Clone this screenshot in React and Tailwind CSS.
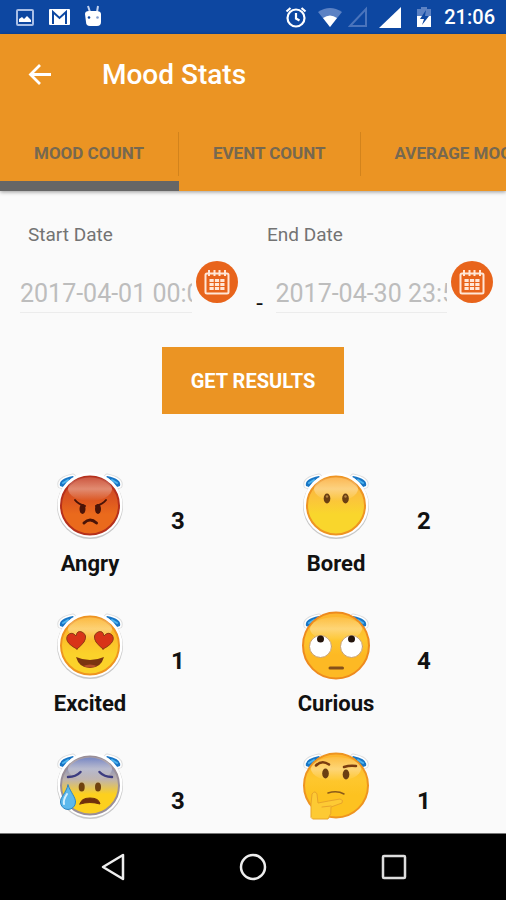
import { useState } from 'react'

const TABS = ['MOOD COUNT', 'EVENT COUNT', 'AVERAGE MOOD']

const MOODS = [
  { name: 'Angry', count: 3, Face: AngryFace },
  { name: 'Bored', count: 2, Face: BoredFace },
  { name: 'Excited', count: 1, Face: ExcitedFace },
  { name: 'Curious', count: 4, Face: CuriousFace },
  { name: 'Sad', count: 3, Face: SadFace },
  { name: 'Thoughtful', count: 1, Face: ThoughtfulFace },
]

function StatusBar() {
  return (
    <div className="flex h-[34px] shrink-0 items-center justify-between bg-[#0d47a1] pl-4 pr-[11px] text-white">
      <div className="flex items-center gap-3">
        <svg className="h-5 w-5" viewBox="0 0 20 20" fill="none">
          <rect x="1" y="3" width="16" height="15" rx="1" stroke="#a9bfe6" strokeWidth="2" />
          <path d="M3 15v-3l3-2 2 2 3-3 4 4v2z" fill="#fff" />
        </svg>
        <svg className="h-5 w-6" viewBox="0 0 24 20">
          <rect x="1" y="2" width="21" height="16" rx="1" fill="#fff" />
          <path d="M5 17V5l6.500 6L18 5v12" fill="none" stroke="#0d47a1" strokeWidth="2" />
        </svg>
        <svg className="h-6 w-5" viewBox="0 0 20 24" fill="#fff">
          <path d="M4 1l2 6M14 1l-1 6" stroke="#c5d4f0" strokeWidth="2" />
          <path d="M1 9q0-3 4-3h7q5 0 5 3v8q0 4-4 4H6q-4 0-4-4z" />
          <circle cx="5" cy="12.500" r="1.300" fill="#0d47a1" />
          <circle cx="13.500" cy="12.500" r="1.300" fill="#7f9bd0" />
        </svg>
      </div>
      <div className="flex items-center">
        <svg className="h-6 w-6" viewBox="0 0 24 24" fill="none" stroke="#fff" strokeWidth="2.200">
          <circle cx="12" cy="13" r="8.500" />
          <path d="M12 8v5.500l3.500 2M2.500 6.500l4-3.500M21.500 6.500l-4-3.500" />
        </svg>
        <svg className="ml-2.5 h-6 w-6" viewBox="0 0 24 24">
          <path d="M0 7Q12-1 24 7L12 22z" fill="#5c82c4" />
          <path d="M5 13q7-5 14 0l-7 9z" fill="#fff" />
        </svg>
        <svg className="ml-1.5 h-6 w-5" viewBox="0 0 20 24">
          <path d="M2 21L18 4v17z" fill="none" stroke="#4a74bc" strokeWidth="2" />
        </svg>
        <svg className="ml-2.5 h-6 w-6" viewBox="0 0 24 24">
          <path d="M1 23L23 2v21z" fill="#fff" />
        </svg>
        <svg className="ml-3 mr-2.5 h-6 w-5" viewBox="0 0 20 24">
          <path d="M3 4h4V2h6v2h4v8H3z" fill="#5c82c4" />
          <path d="M3 11h14v11H3z" fill="#fff" />
          <path d="M12 5l-6 9h4l-2 6 7-9h-4z" fill="#0d47a1" />
        </svg>
        <span className="text-xl font-medium">21:06</span>
      </div>
    </div>
  )
}

function CalendarButton({ label }) {
  return (
    <button type="button" aria-label={label} className="h-[42px] w-[42px] shrink-0">
      <svg viewBox="0 0 42 42" fill="none">
        <circle cx="21" cy="21" r="21" fill="#e8641b" />
        <rect x="9.500" y="12.500" width="23" height="20" rx="1.500" stroke="#ffe6d6" strokeWidth="2" />
        <path d="M13 9v6M18.500 9v6M23.500 9v6M29 9v6" stroke="#ffe6d6" strokeWidth="2" />
        <path d="M13.500 19.500h15M13.500 23.500h15M13.500 27.500h15" stroke="#ffe6d6" strokeWidth="3" strokeDasharray="4.200 1.200" />
      </svg>
    </button>
  )
}

// Blue halo whose two ends peek out behind every face
function Halo() {
  const ends = 'M6 16Q4 9 19 6L24 12L9 17zM66 16Q68 9 53 6L48 12L63 17z'
  return (
    <>
      <path d={ends} stroke="#dedede" strokeWidth="5" strokeLinejoin="round" />
      <path d={ends} stroke="#fff" strokeWidth="3" strokeLinejoin="round" />
      <path d={ends} fill="#1976c5" />
      <path d="M9 13l5-3M63 13l-5-3" stroke="#4cb4ee" strokeWidth="2" />
    </>
  )
}

function Face({ id, colors, outlined, r = 30, children }) {
  return (
    <svg className="h-[72px] w-[72px]" viewBox="0 0 72 72" fill="none" strokeLinecap="round" aria-hidden="true">
      <defs>
        <linearGradient id={id} x1="0" y1="0" x2="0" y2="1">
          <stop offset="0.05" stopColor={colors[0]} />
          <stop offset="0.4" stopColor={colors[1]} />
          <stop offset="0.65" stopColor={colors[2]} />
        </linearGradient>
        <linearGradient id={`${id}-shine`} x1="0" y1="0" x2="0" y2="1">
          <stop offset="0" stopColor="#fff" stopOpacity="0.1" />
          <stop offset="0.5" stopColor="#fff" stopOpacity="0.35" />
          <stop offset="1" stopColor="#fff" stopOpacity="0" />
        </linearGradient>
      </defs>
      <Halo />
      {outlined && (
        <>
          <circle cx="36" cy="36" r="33" fill="#c8c8c8" />
          <circle cx="36" cy="35" r="32.500" fill="#fff" />
        </>
      )}
      <circle cx="36" cy="35.500" r={r - 1} fill={`url(#${id})`} stroke={colors[3]} strokeWidth="2" />
      <ellipse cx="36" cy="19" rx={r - 8} ry="12" fill={`url(#${id}-shine)`} />
      {children}
    </svg>
  )
}

function AngryFace() {
  return (
    <Face id="angry" outlined colors={['#c8452a', '#dc5620', '#ea6a1c', '#b5301c']}>
      <ellipse cx="28.500" cy="39" rx="3" ry="5" fill="#4a1408" />
      <ellipse cx="44" cy="39" rx="3" ry="5" fill="#4a1408" />
      <path d="M21 30q3 4 10 6M52 30q-3 4-10 6" stroke="#4a1408" strokeWidth="2" />
      <path d="M30 53q6-6 12.500 0" stroke="#4a1408" strokeWidth="3" />
    </Face>
  )
}

function BoredFace() {
  return (
    <Face id="bored" outlined colors={['#fbb040', '#fbc53a', '#f9d62c', '#ee9422']}>
      <ellipse cx="27" cy="28.500" rx="3.300" ry="5" fill="#6b3f12" />
      <ellipse cx="45.500" cy="28.500" rx="3.300" ry="5" fill="#6b3f12" />
      <circle cx="27" cy="26.500" r="1.200" fill="#b5823c" />
      <circle cx="45.500" cy="26.500" r="1.200" fill="#b5823c" />
    </Face>
  )
}

function ExcitedFace() {
  return (
    <Face id="excited" outlined colors={['#fbb32c', '#fcc02a', '#fbd22a', '#ee9420']}>
      <path d="M23 39C13 34 11 29 14 25q4-4 8 1 1-6 6-4 6 3 2 10-3 4-7 7z" fill="#d83418" stroke="#8f3a14" strokeWidth="1" />
      <path d="M49 39C59 34 61 29 58 25q-4-4-8 1-1-6-6-4-6 3-2 10 3 4 7 7z" fill="#d83418" stroke="#8f3a14" strokeWidth="1" />
      <path d="M22 47q14 6 28 0-3 11-14 11T22 47z" fill="#7a3410" />
      <path d="M29 56q7-3 14 0-7 3-14 0z" fill="#b4502a" />
    </Face>
  )
}

function CuriousFace() {
  return (
    <Face id="curious" r={34} colors={['#fdb62e', '#fec62e', '#fdb924', '#ee8a1e']}>
      <circle cx="20.500" cy="36.500" r="11" fill="#fff" stroke="#c8a070" strokeWidth="1" />
      <circle cx="51.500" cy="36.500" r="11" fill="#fff" stroke="#c8a070" strokeWidth="1" />
      <circle cx="20.500" cy="29" r="3.500" fill="#24140c" />
      <circle cx="51.500" cy="29" r="3.500" fill="#24140c" />
      <path d="M30 58h12.500" stroke="#84501a" strokeWidth="3" />
    </Face>
  )
}

function SadFace() {
  return (
    <Face id="sad" outlined colors={['#6c7cbc', '#c0b4ac', '#fdd01e', '#9a8f98']}>
      <path d="M14 27q8 0 12.500-5M58 27q-8 0-12.500-5" stroke="#3c3c80" strokeWidth="2.500" />
      <ellipse cx="27.700" cy="37" rx="3" ry="4.500" fill="#70420e" />
      <ellipse cx="44" cy="37" rx="3" ry="4.500" fill="#70420e" />
      <path d="M26 54q1-6 10-6t10 6q-10-3-20 0z" fill="#70300c" stroke="#70300c" strokeWidth="1" />
      <path d="M14 35c3 8 7.500 12 7.500 17a7.500 7.500 0 0 1-15 0c0-5 5.500-9 7.500-17z" fill="#5cb8ec" stroke="#2c86c4" strokeWidth="1" />
      <path d="M13 44q-4 6-3 10" stroke="#d4f0ff" strokeWidth="2" />
    </Face>
  )
}

function ThoughtfulFace() {
  return (
    <Face id="thoughtful" r={33} colors={['#fdb62e', '#fec72e', '#fdc220', '#ee9420']}>
      <path d="M16 15.500q6-6 13-1" stroke="#7a3c10" strokeWidth="2.500" />
      <path d="M44 17q6-2 12-1" stroke="#7a3c10" strokeWidth="2.500" />
      <ellipse cx="25.500" cy="23.500" rx="3.300" ry="5" fill="#6b3f12" />
      <ellipse cx="46" cy="24.500" rx="3.300" ry="5" fill="#6b3f12" />
      <path d="M28 43q9-3 16 1" stroke="#8a5a1a" strokeWidth="1.500" />
      <path d="M11 67V54l1-10q3-4 5 0l1 9q10-2 22-4 4 1 2 4l-11 4q1 7-3 12H13z" fill="#fdca34" stroke="#e8a42a" strokeWidth="1" />
      <path d="M22 57l9-1" stroke="#e8a42a" strokeWidth="1" />
    </Face>
  )
}

function MoodCell({ mood }) {
  return (
    <li className="flex h-[140px] pl-5">
      <div className="flex w-[140px] flex-col items-center">
        <mood.Face />
        <span className="mt-2 text-[22px] font-bold leading-7">{mood.name}</span>
      </div>
      <span className="w-9 pt-[37px] text-center text-2xl font-bold leading-7">{mood.count}</span>
    </li>
  )
}

export default function App() {
  const [activeTab, setActiveTab] = useState(0)
  const [startDate, setStartDate] = useState('2017-04-01 00:00:00')
  const [endDate, setEndDate] = useState('2017-04-30 23:59:59')

  return (
    <div className="flex h-screen flex-col overflow-hidden bg-[#fafafa] font-['Roboto',sans-serif] text-[#111]">
      <StatusBar />

      <header className="z-10 shrink-0 bg-[#eb9423] shadow-[0_1px_4px_rgba(0,0,0,0.4)]">
        <div className="flex h-[82px] items-center gap-12 pl-[26px] text-white">
          <button type="button" aria-label="Back">
            <svg className="h-7 w-7" viewBox="0 0 28 28" fill="none" stroke="currentColor" strokeWidth="2.800">
              <path d="M25 13.500H5M14 4l-9.500 9.500L14 23" />
            </svg>
          </button>
          <h1 className="text-[28px] font-medium">Mood Stats</h1>
        </div>

        <div role="tablist" className="flex h-[75px] overflow-hidden">
          {TABS.map((tab, i) => (
            <button
              key={tab}
              type="button"
              role="tab"
              aria-selected={activeTab === i}
              onClick={() => setActiveTab(i)}
              className={`flex shrink-0 flex-col border-b-10 pt-4 ${activeTab === i ? 'border-[#666]' : 'border-transparent'}`}
            >
              <span className={`flex h-11 items-center whitespace-nowrap px-[34px] text-[17px] font-bold text-[#766850] ${i < TABS.length - 1 ? 'border-r border-[#d2831c]' : ''}`}>
                {tab}
              </span>
            </button>
          ))}
        </div>
      </header>

      <main className="min-h-0 flex-1 overflow-y-auto [scrollbar-width:none]">
        <form onSubmit={e => e.preventDefault()}>
          <div className="grid grid-cols-2 pl-7 pt-8 text-[19px] leading-6 text-[#737373]">
            <label htmlFor="start-date">Start Date</label>
            <label htmlFor="end-date">End Date</label>
          </div>

          <div className="flex pl-5 pr-[13px] pt-3.5">
            <div className="flex min-w-0 flex-1 items-start gap-1">
              <input
                id="start-date"
                value={startDate}
                onChange={e => setStartDate(e.target.value)}
                className="mt-3 h-10 min-w-0 flex-1 border-b border-[#ececec] pt-0.5 text-[25px] text-[#bdbdbd] outline-none"
              />
              <CalendarButton label="Pick start date" />
            </div>
            <span className="w-[38px] pl-1.5 pt-7 text-center text-2xl leading-7">-</span>
            <div className="flex min-w-0 flex-1 items-start gap-1">
              <input
                id="end-date"
                value={endDate}
                onChange={e => setEndDate(e.target.value)}
                className="mt-3 h-10 min-w-0 flex-1 border-b border-[#ececec] pt-0.5 text-[25px] text-[#bdbdbd] outline-none"
              />
              <CalendarButton label="Pick end date" />
            </div>
          </div>

          <div className="flex justify-center pt-[30px]">
            <button type="submit" className="h-[67px] bg-[#eb9423] px-[29px] text-xl font-bold text-white">
              GET RESULTS
            </button>
          </div>
        </form>

        <ul className="grid grid-cols-2 pr-3.5 pt-14">
          {MOODS.map(mood => (
            <MoodCell key={mood.name} mood={mood} />
          ))}
        </ul>
      </main>

      <nav className="flex h-[67px] shrink-0 items-center justify-center gap-28 border-t border-[#777] bg-black">
        <button type="button" aria-label="Back">
          <svg className="h-7 w-7" viewBox="0 0 28 28" fill="none" stroke="#eee" strokeWidth="2.500" strokeLinejoin="round">
            <path d="M24 2v24L4 14z" />
          </svg>
        </button>
        <button type="button" aria-label="Home">
          <svg className="h-7 w-7" viewBox="0 0 28 28" fill="none" stroke="#eee" strokeWidth="2.500">
            <circle cx="14" cy="14" r="12" />
          </svg>
        </button>
        <button type="button" aria-label="Recent apps">
          <svg className="h-7 w-7" viewBox="0 0 28 28" fill="none" stroke="#ddd" strokeWidth="2.500">
            <rect x="4" y="3" width="22" height="22" rx="1" />
          </svg>
        </button>
      </nav>
    </div>
  )
}
